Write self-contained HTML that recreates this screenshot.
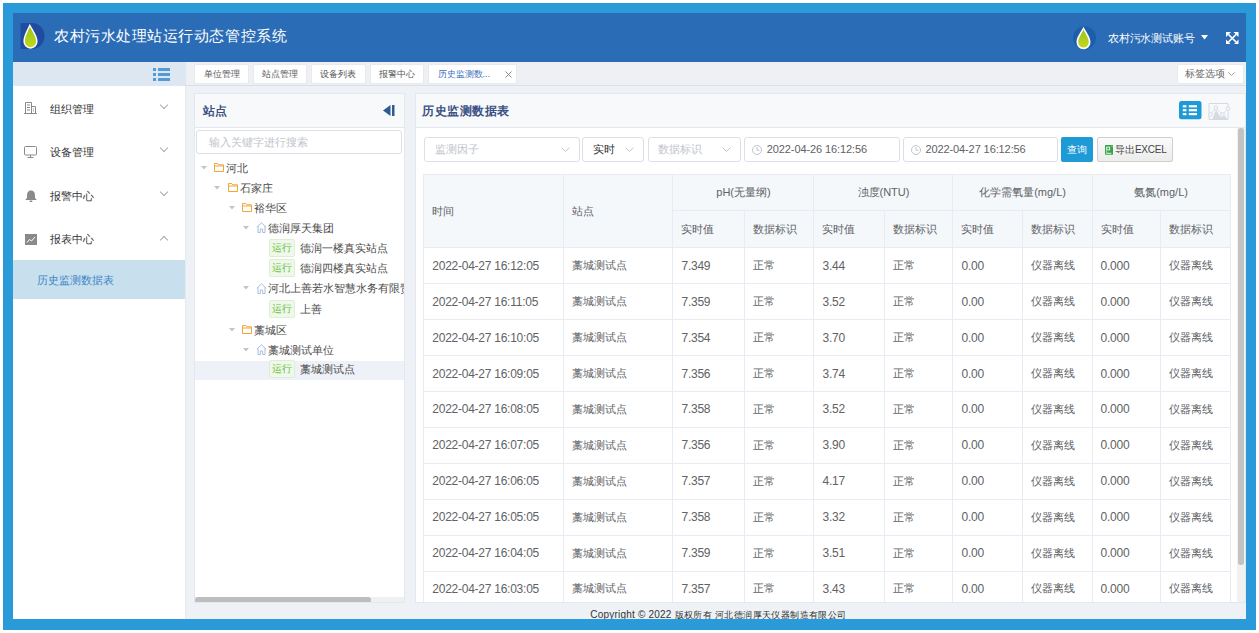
<!DOCTYPE html>
<html><head><meta charset="utf-8">
<style>
*{box-sizing:border-box;margin:0;padding:0}
html,body{width:1259px;height:633px;overflow:hidden;background:#fff;font-family:"Liberation Sans",sans-serif;color:#333}
.abs{position:absolute}
#frame{position:absolute;left:3px;top:3px;width:1253px;height:627px;background:#2b9ad8}
#inner{position:absolute;left:13px;top:13px;width:1233px;height:606px;background:#eef1f5;overflow:hidden}
#header{position:absolute;left:0;top:0;width:1233px;height:49px;background:#2b6cb6}
#title{position:absolute;left:41px;top:12px;font-size:15.4px;letter-spacing:0.55px;color:#fff;white-space:nowrap;line-height:22px}
#user{position:absolute;left:1095px;top:18px;font-size:11px;color:#fff;white-space:nowrap;line-height:14px;letter-spacing:-0.2px}
#sbtop{position:absolute;left:0;top:49px;width:173px;height:24px;background:#dde7f1}
#tabbar{position:absolute;left:173px;top:49px;width:1060px;height:24px;background:#eff0f3;border-bottom:1px solid #dcdfe6}
.tab{position:absolute;top:2px;height:19.5px;background:#fff;border:1px solid #e8eaee;border-radius:2px;font-size:9px;line-height:18.5px;color:#555;text-align:center;white-space:nowrap}
#sidebar{position:absolute;left:0;top:73px;width:173px;height:533px;background:#fff;border-right:1px solid #e6e9ee}
.mi{position:absolute;left:37px;font-size:11px;line-height:14px;color:#333;white-space:nowrap}
.chev{position:absolute;left:148px;width:6px;height:6px;border-right:1px solid #aaa;border-bottom:1px solid #aaa}
#submenu{position:absolute;left:0;top:174px;width:172px;height:39px;background:#c8e0ee}
#tree{position:absolute;left:180.5px;top:80.3px;width:211px;height:510px;background:#fff;border:1px solid #e4e7ed}
#data{position:absolute;left:401.5px;top:80.3px;width:831px;height:510px;background:#fff;border:1px solid #e4e7ed}
.phead{position:absolute;left:0;top:0;right:0;height:34px;background:#f8f9fb;border-bottom:1px solid #e4e7ed}
.tt{position:absolute;font-size:11px;line-height:20px;color:#4a4a4a;white-space:nowrap}
.tag{position:absolute;width:25.6px;height:18px;background:#eff8ea;border:1px solid #dcefd1;border-radius:2px;font-size:9.5px;line-height:16px;color:#67c23a;text-align:center}
#tree{overflow:hidden}
.sel{position:absolute;top:42.5px;height:25px;border:1px solid #dcdfe6;border-radius:3px;background:#fff}
.sel span{position:absolute;top:0;font-size:11px;line-height:23px;white-space:nowrap}
.sel span.d{color:#606266;letter-spacing:-0.1px}
#data{overflow:hidden}
#tbl{position:absolute;border-collapse:collapse;table-layout:fixed;width:806.3px}
#tbl td{border:1px solid #e8ebf1;font-size:11px;color:#606266;padding:0 0 0 8px;white-space:nowrap;overflow:hidden}
#tbl tr.h1 td,#tbl tr.h2 td{background:#f5f8fb;color:#606266}
#tbl tr.h1{height:36px}
#tbl tr.h2{height:37px}
#tbl tr{height:35.9px}
#tbl td.c{text-align:center;padding:0}
#tbl td.dt,#tbl td.num{font-size:12px;letter-spacing:-0.25px}
#footer{position:absolute;left:172px;top:596px;width:1067px;text-align:center;font-size:9.5px;line-height:12px;color:#333;white-space:nowrap}
</style></head>
<body>
<div id="frame"></div>
<div id="inner">
  <div id="header">
    <svg class="abs" style="left:7px;top:10px" width="25" height="26" viewBox="0 0 25 26">
      <path d="M0.5 0 H12 A12.5 13 0 0 1 12 26 H0.5 Z" fill="#1f4ca0"/>
      <path d="M9.8 0.8 C12 6 17.6 12 17.6 18.6 A7.1 7.1 0 0 1 3.4 18.6 C3.4 12 7.8 6 9.8 0.8 Z" fill="#fff"/>
      <defs><linearGradient id="g1" x1="0" y1="0" x2="0" y2="1"><stop offset="0" stop-color="#9cc21a"/><stop offset="1" stop-color="#c3d820"/></linearGradient></defs>
      <path d="M9.9 3.8 C11.6 8 16.1 13 16.1 18.6 A5.6 5.6 0 0 1 4.9 18.6 C4.9 13 8.4 8 9.9 3.8 Z" fill="url(#g1)"/>
    </svg>
    <div id="title">农村污水处理站运行动态管控系统</div>
    <svg class="abs" style="left:1060px;top:12.5px" width="24" height="24" viewBox="0 0 24 24">
      <circle cx="11.5" cy="11.8" r="11.5" fill="#1c5ea9"/>
      <path d="M10.5 0.8 C13 6 17.5 11 17.5 16.2 A7 7 0 0 1 3.5 16.2 C3.5 11 8 6 10.5 0.8 Z" fill="#fff"/>
      <path d="M10.5 3.8 C12.5 8 15.8 12 15.8 16.2 A5.3 5.3 0 0 1 5.2 16.2 C5.2 12 8.5 8 10.5 3.8 Z" fill="url(#g1)"/>
    </svg>
    <div id="user">农村污水测试账号</div>
    <svg class="abs" style="left:1188px;top:22px" width="7" height="5" viewBox="0 0 7 5"><path d="M0 0 H7 L3.5 4.5 Z" fill="#fff"/></svg>
    <svg class="abs" style="left:1213px;top:18.8px" width="12.5" height="12.5" viewBox="0 0 12.5 12.5">
      <path d="M2.5 2.5 L10 10 M10 2.5 L2.5 10" stroke="#fff" stroke-width="1.7"/>
      <path d="M0 0 H5 L0 5 Z M12.5 0 V5 L7.5 0 Z M12.5 12.5 H7.5 L12.5 7.5 Z M0 12.5 V7.5 L5 12.5 Z" fill="#fff"/>
    </svg>
  </div>
  <div id="sbtop">
    <svg class="abs" style="left:140px;top:6px" width="17" height="13" viewBox="0 0 17 13" fill="#549bd6">
      <rect x="0" y="0" width="3" height="3"/><rect x="5" y="0" width="12" height="3"/>
      <rect x="0" y="5" width="3" height="3"/><rect x="5" y="5" width="12" height="3"/>
      <rect x="0" y="10" width="3" height="3"/><rect x="5" y="10" width="12" height="3"/>
    </svg>
  </div>
  <div id="tabbar">
    <div class="tab" style="left:8px;width:55px">单位管理</div>
    <div class="tab" style="left:66.8px;width:54.4px">站点管理</div>
    <div class="tab" style="left:125px;width:54.6px">设备列表</div>
    <div class="tab" style="left:183.6px;width:54.4px">报警中心</div>
    <div class="tab" style="left:241.6px;width:89.3px;color:#3b6fc0;text-align:left;padding-left:9px">历史监测数...<svg class="abs" style="left:76.5px;top:5.8px" width="7" height="7" viewBox="0 0 7 7" stroke="#8a8a8a" stroke-width="1"><path d="M0.5 0.5 L6.5 6.5 M6.5 0.5 L0.5 6.5"/></svg></div>
    <div class="tab" style="left:991px;top:2px;width:67px;height:19.5px;line-height:17.5px;color:#666;font-size:9.5px;text-align:left;padding-left:7px">标签选项<svg class="abs" style="left:50px;top:6.5px" width="7" height="4" viewBox="0 0 7 4" fill="none" stroke="#999" stroke-width="0.9"><path d="M0.3 0.3 L3.5 3.5 L6.7 0.3"/></svg></div>
  </div>
  <div id="sidebar">
    <svg class="abs" style="left:11px;top:16px" width="13" height="12" viewBox="0 0 13 12" fill="none" stroke="#8a8a8a" stroke-width="1">
      <path d="M0 11.5 H13"/><path d="M1.5 11.5 V0.5 H7.5 V11.5"/><path d="M7.5 4.5 H11.5 V11.5"/>
      <path d="M3 3 H6 M3 5.5 H6 M3 8 H6 M9 7 H10 M9 9 H10"/>
    </svg>
    <div class="mi" style="top:15.5px">组织管理</div>
    <div class="chev" style="top:15.5px;transform:rotate(45deg)"></div>
    <svg class="abs" style="left:11px;top:60px" width="13" height="12" viewBox="0 0 13 12" fill="none" stroke="#8a8a8a" stroke-width="1">
      <rect x="0.5" y="0.5" width="12" height="8.5" rx="1"/><path d="M6.5 9 V11.3 M3.5 11.5 H9.5"/>
    </svg>
    <div class="mi" style="top:59px">设备管理</div>
    <div class="chev" style="top:59px;transform:rotate(45deg)"></div>
    <svg class="abs" style="left:11.5px;top:103.5px" width="12" height="12" viewBox="0 0 12 12" fill="#8a8a8a">
      <path d="M6 0.5 C3 0.5 2 3 2 5.5 V8 L0.5 9.5 V10 H11.5 V9.5 L10 8 V5.5 C10 3 9 0.5 6 0.5 Z"/><rect x="4.5" y="10.5" width="3" height="1.5" rx="0.7"/>
    </svg>
    <div class="mi" style="top:102.5px">报警中心</div>
    <div class="chev" style="top:102.5px;transform:rotate(45deg)"></div>
    <svg class="abs" style="left:11.5px;top:148px" width="12" height="11" viewBox="0 0 12 11">
      <rect x="0" y="0" width="12" height="11" fill="#8a8a8a"/><path d="M2 8.5 L4.5 5.5 L6.5 7 L10 3" stroke="#fff" stroke-width="1" fill="none"/>
    </svg>
    <div class="mi" style="top:146px">报表中心</div>
    <div class="chev" style="top:151px;transform:rotate(-135deg)"></div>
    <div id="submenu"><div class="mi" style="left:23.5px;top:12.5px;color:#3d86c6">历史监测数据表</div></div>
  </div>
  <div id="tree">
    <div class="phead">
      <div class="abs" style="left:8.5px;top:9px;font-size:11.5px;font-weight:bold;color:#3a5283;line-height:17px">站点</div>
      <svg class="abs" style="left:188.5px;top:11.2px" width="12" height="11" viewBox="0 0 12 11" fill="#2f5c8f"><path d="M0 5.5 L7.5 0 V11 Z"/><rect x="9" y="0" width="2.5" height="11"/></svg>
    </div>
    <div class="abs" style="left:1.5px;top:35.7px;width:206px;height:24.5px;border:1px solid #dcdfe6;border-radius:3px;font-size:11px;line-height:22px;color:#c0c4cc;padding-left:12px;white-space:nowrap">输入关键字进行搜索</div>
    <svg class="abs" style="left:6.1px;top:71.4px" width="6" height="4" viewBox="0 0 6 4"><path d="M0 0 H6 L3 3.5 Z" fill="#c0c4cc"/></svg>
    <svg class="abs" style="left:19.7px;top:68.9px" width="10" height="9" viewBox="0 0 10 9" fill="none" stroke="#f3a43a" stroke-width="1"><path d="M0.5 0.5 H3.8 L4.8 1.8 H9.5 V8.5 H0.5 Z M0.5 3 H9.5"/></svg>
    <div class="tt" style="left:31.9px;top:63.4px">河北</div>
    <svg class="abs" style="left:19.9px;top:91.4px" width="6" height="4" viewBox="0 0 6 4"><path d="M0 0 H6 L3 3.5 Z" fill="#c0c4cc"/></svg>
    <svg class="abs" style="left:33.7px;top:88.9px" width="10" height="9" viewBox="0 0 10 9" fill="none" stroke="#f3a43a" stroke-width="1"><path d="M0.5 0.5 H3.8 L4.8 1.8 H9.5 V8.5 H0.5 Z M0.5 3 H9.5"/></svg>
    <div class="tt" style="left:45.7px;top:83.4px">石家庄</div>
    <svg class="abs" style="left:34.3px;top:111.4px" width="6" height="4" viewBox="0 0 6 4"><path d="M0 0 H6 L3 3.5 Z" fill="#c0c4cc"/></svg>
    <svg class="abs" style="left:47.5px;top:108.9px" width="10" height="9" viewBox="0 0 10 9" fill="none" stroke="#f3a43a" stroke-width="1"><path d="M0.5 0.5 H3.8 L4.8 1.8 H9.5 V8.5 H0.5 Z M0.5 3 H9.5"/></svg>
    <div class="tt" style="left:59.8px;top:103.4px">裕华区</div>
    <svg class="abs" style="left:48.1px;top:131.4px" width="6" height="4" viewBox="0 0 6 4"><path d="M0 0 H6 L3 3.5 Z" fill="#c0c4cc"/></svg>
    <svg class="abs" style="left:61.4px;top:127.9px" width="11" height="11" viewBox="0 0 11 11" fill="none" stroke="#a7bedb" stroke-width="1"><path d="M0.8 5.3 L5.5 0.8 L10.2 5.3 M2 4.3 V10.5 H4.3 V7 H6.7 V10.5 H9 V4.3"/></svg>
    <div class="tt" style="left:73.5px;top:123.4px">德润厚天集团</div>
    <div class="tag" style="left:74.6px;top:144.7px">运行</div>
    <div class="tt" style="left:105.5px;top:143.7px">德润一楼真实站点</div>
    <div class="tag" style="left:74.6px;top:164.8px">运行</div>
    <div class="tt" style="left:105.5px;top:163.8px">德润四楼真实站点</div>
    <svg class="abs" style="left:48.1px;top:192.0px" width="6" height="4" viewBox="0 0 6 4"><path d="M0 0 H6 L3 3.5 Z" fill="#c0c4cc"/></svg>
    <svg class="abs" style="left:61.4px;top:188.5px" width="11" height="11" viewBox="0 0 11 11" fill="none" stroke="#a7bedb" stroke-width="1"><path d="M0.8 5.3 L5.5 0.8 L10.2 5.3 M2 4.3 V10.5 H4.3 V7 H6.7 V10.5 H9 V4.3"/></svg>
    <div class="tt" style="left:73.5px;top:184.0px">河北上善若水智慧水务有限责任公司</div>
    <div class="tag" style="left:74.6px;top:205.7px">运行</div>
    <div class="tt" style="left:105.5px;top:204.7px">上善</div>
    <svg class="abs" style="left:34.3px;top:233.4px" width="6" height="4" viewBox="0 0 6 4"><path d="M0 0 H6 L3 3.5 Z" fill="#c0c4cc"/></svg>
    <svg class="abs" style="left:47.5px;top:230.9px" width="10" height="9" viewBox="0 0 10 9" fill="none" stroke="#f3a43a" stroke-width="1"><path d="M0.5 0.5 H3.8 L4.8 1.8 H9.5 V8.5 H0.5 Z M0.5 3 H9.5"/></svg>
    <div class="tt" style="left:59.8px;top:225.4px">藁城区</div>
    <svg class="abs" style="left:48.1px;top:253.4px" width="6" height="4" viewBox="0 0 6 4"><path d="M0 0 H6 L3 3.5 Z" fill="#c0c4cc"/></svg>
    <svg class="abs" style="left:61.4px;top:249.9px" width="11" height="11" viewBox="0 0 11 11" fill="none" stroke="#a7bedb" stroke-width="1"><path d="M0.8 5.3 L5.5 0.8 L10.2 5.3 M2 4.3 V10.5 H4.3 V7 H6.7 V10.5 H9 V4.3"/></svg>
    <div class="tt" style="left:73.5px;top:245.4px">藁城测试单位</div>
    <div class="abs" style="left:0;top:266.9px;width:209px;height:19px;background:#eef2f8"></div>
    <div class="tag" style="left:74.6px;top:266.1px">运行</div>
    <div class="tt" style="left:105.5px;top:265.1px">藁城测试点</div>
    <div class="abs" style="left:0;top:502.5px;width:209px;height:6.5px;background:#f0f0f0"></div>
    <div class="abs" style="left:0.5px;top:502.5px;width:176px;height:6.5px;background:#bdbdbd;border-radius:3px"></div>
  </div>
  <div id="data">
    <div class="phead">
      <div class="abs" style="left:6.5px;top:9px;font-size:12.3px;letter-spacing:0.5px;font-weight:bold;color:#3b5284;line-height:17px">历史监测数据表</div>
      <svg class="abs" style="left:763.3px;top:7.1px" width="23" height="19" viewBox="0 0 23 19"><rect x="0" y="0" width="22.5" height="18.3" rx="2.5" fill="#1e9ad6"/>
        <g fill="#fff"><rect x="3.8" y="4.2" width="3.6" height="2.2"/><rect x="9.8" y="4.2" width="8.2" height="2.2"/><rect x="3.8" y="8.1" width="3.6" height="2.2"/><rect x="9.8" y="8.1" width="8.2" height="2.2"/><rect x="3.8" y="12" width="3.6" height="2.2"/><rect x="9.8" y="12" width="8.2" height="2.2"/></g></svg>
      <svg class="abs" style="left:792.3px;top:7.7px" width="23" height="19" viewBox="0 0 23 19" fill="none" stroke="#d5d9e1" stroke-width="1"><path d="M1 17.5 V1.5 H20 V5 M20 9 V17.5 H1"/>
        <path d="M2.5 12.5 L7.5 6 L14.5 12.5 L20.5 6" stroke="#dde0e6"/>
        <path d="M4 17.5 C6 14 7 9 8 8 C9.5 10 11 14 13.5 15.5 L17 14 L19.5 17.5 Z" fill="#d5d9e1" stroke="none"/>
        <circle cx="2.5" cy="12.5" r="1.8" fill="#f8f9fb"/><circle cx="7.8" cy="5.8" r="1.8" fill="#f8f9fb"/><circle cx="14.5" cy="12.5" r="1.8" fill="#f8f9fb"/><circle cx="20.2" cy="6.5" r="1.8" fill="#f8f9fb"/></svg>
    </div>
    <div class="sel" style="left:8.6px;width:155.7px"><span style="left:9.5px;color:#c0c4cc">监测因子</span><svg class="abs" style="left:136px;top:9.5px" width="9" height="5" viewBox="0 0 9 5" fill="none" stroke="#c0c4cc" stroke-width="1"><path d="M0.5 0.5 L4.5 4.5 L8.5 0.5"/></svg></div>
    <div class="sel" style="left:166.8px;width:62.2px"><span style="left:10px;color:#333">实时</span><svg class="abs" style="left:41.5px;top:9.5px" width="9" height="5" viewBox="0 0 9 5" fill="none" stroke="#c0c4cc" stroke-width="1"><path d="M0.5 0.5 L4.5 4.5 L8.5 0.5"/></svg></div>
    <div class="sel" style="left:232.7px;width:92.7px"><span style="left:9px;color:#c0c4cc">数据标识</span><svg class="abs" style="left:72.5px;top:9.5px" width="9" height="5" viewBox="0 0 9 5" fill="none" stroke="#c0c4cc" stroke-width="1"><path d="M0.5 0.5 L4.5 4.5 L8.5 0.5"/></svg></div>
    <div class="sel" style="left:328.8px;width:155.5px"><svg class="abs" style="left:7px;top:7px" width="10" height="10" viewBox="0 0 10 10" fill="none" stroke="#c0c4cc" stroke-width="1"><circle cx="5" cy="5" r="4.5"/><path d="M5 2 V5.2 H7.5"/></svg><span class="d" style="left:21.5px;top:0.7px">2022-04-26 16:12:56</span></div>
    <div class="sel" style="left:487.4px;width:155.5px"><svg class="abs" style="left:7px;top:7px" width="10" height="10" viewBox="0 0 10 10" fill="none" stroke="#c0c4cc" stroke-width="1"><circle cx="5" cy="5" r="4.5"/><path d="M5 2 V5.2 H7.5"/></svg><span class="d" style="left:21.5px;top:0.7px">2022-04-27 16:12:56</span></div>
    <div class="abs" style="left:645.8px;top:42.9px;width:32.1px;height:24.6px;background:#1e9ad6;border-radius:2px;color:#fff;font-size:10px;line-height:26px;text-align:center">查询</div>
    <div class="abs" style="left:681.8px;top:42.9px;width:75.4px;height:24.6px;background:linear-gradient(#fbfbfb,#ececec);border:1px solid #cfcfcf;border-radius:2px;color:#333;font-size:10px;line-height:22px;white-space:nowrap">
      <svg class="abs" style="left:6.5px;top:6.4px" width="8.5" height="10" viewBox="0 0 8.5 10"><rect x="0" y="0" width="8.2" height="9.8" rx="0.8" fill="#36a347"/><rect x="1.7" y="2.1" width="3" height="2.8" fill="none" stroke="#fff" stroke-width="0.9"/><path d="M1.6 5.5 V7.8" stroke="#bfe3c4" stroke-width="0.9"/><path d="M1.2 8.3 H6.3" stroke="#fff" stroke-width="0.9"/><path d="M6 1 L7.3 1 L7.3 2.3" stroke="#8fd39a" stroke-width="0.7" fill="none"/></svg>
      <span class="abs" style="left:17px;top:1px;letter-spacing:-0.2px;color:#444">导出EXCEL</span></div>
    <table id="tbl" style="left:7.8px;top:80.2px"><colgroup><col style="width:140.2px"><col style="width:109.0px"><col style="width:71.9px"><col style="width:69.1px"><col style="width:70.1px"><col style="width:68.9px"><col style="width:69.3px"><col style="width:69.8px"><col style="width:68.9px"><col style="width:69.1px"></colgroup>
      <tr class="h1"><td rowspan="2">时间</td><td rowspan="2">站点</td><td colspan="2" class="c">pH(无量纲)</td><td colspan="2" class="c">浊度(NTU)</td><td colspan="2" class="c">化学需氧量(mg/L)</td><td colspan="2" class="c">氨氮(mg/L)</td></tr>
      <tr class="h2"><td>实时值</td><td>数据标识</td><td>实时值</td><td>数据标识</td><td>实时值</td><td>数据标识</td><td>实时值</td><td>数据标识</td></tr>
      <tr><td class="dt">2022-04-27 16:12:05</td><td>藁城测试点</td><td class="num">7.349</td><td>正常</td><td class="num">3.44</td><td>正常</td><td class="num">0.00</td><td>仪器离线</td><td class="num">0.000</td><td>仪器离线</td></tr>
      <tr><td class="dt">2022-04-27 16:11:05</td><td>藁城测试点</td><td class="num">7.359</td><td>正常</td><td class="num">3.52</td><td>正常</td><td class="num">0.00</td><td>仪器离线</td><td class="num">0.000</td><td>仪器离线</td></tr>
      <tr><td class="dt">2022-04-27 16:10:05</td><td>藁城测试点</td><td class="num">7.354</td><td>正常</td><td class="num">3.70</td><td>正常</td><td class="num">0.00</td><td>仪器离线</td><td class="num">0.000</td><td>仪器离线</td></tr>
      <tr><td class="dt">2022-04-27 16:09:05</td><td>藁城测试点</td><td class="num">7.356</td><td>正常</td><td class="num">3.74</td><td>正常</td><td class="num">0.00</td><td>仪器离线</td><td class="num">0.000</td><td>仪器离线</td></tr>
      <tr><td class="dt">2022-04-27 16:08:05</td><td>藁城测试点</td><td class="num">7.358</td><td>正常</td><td class="num">3.52</td><td>正常</td><td class="num">0.00</td><td>仪器离线</td><td class="num">0.000</td><td>仪器离线</td></tr>
      <tr><td class="dt">2022-04-27 16:07:05</td><td>藁城测试点</td><td class="num">7.356</td><td>正常</td><td class="num">3.90</td><td>正常</td><td class="num">0.00</td><td>仪器离线</td><td class="num">0.000</td><td>仪器离线</td></tr>
      <tr><td class="dt">2022-04-27 16:06:05</td><td>藁城测试点</td><td class="num">7.357</td><td>正常</td><td class="num">4.17</td><td>正常</td><td class="num">0.00</td><td>仪器离线</td><td class="num">0.000</td><td>仪器离线</td></tr>
      <tr><td class="dt">2022-04-27 16:05:05</td><td>藁城测试点</td><td class="num">7.358</td><td>正常</td><td class="num">3.32</td><td>正常</td><td class="num">0.00</td><td>仪器离线</td><td class="num">0.000</td><td>仪器离线</td></tr>
      <tr><td class="dt">2022-04-27 16:04:05</td><td>藁城测试点</td><td class="num">7.359</td><td>正常</td><td class="num">3.51</td><td>正常</td><td class="num">0.00</td><td>仪器离线</td><td class="num">0.000</td><td>仪器离线</td></tr>
      <tr><td class="dt">2022-04-27 16:03:05</td><td>藁城测试点</td><td class="num">7.357</td><td>正常</td><td class="num">3.43</td><td>正常</td><td class="num">0.00</td><td>仪器离线</td><td class="num">0.000</td><td>仪器离线</td></tr>
    </table>
    <div class="abs" style="left:821.5px;top:33.7px;width:8px;height:475px;background:#f1f1f1"></div>
    <div class="abs" style="left:822.7px;top:33.7px;width:5.4px;height:437.5px;background:#c3c3c3;border-radius:2.7px"></div>
  </div>
  <div id="footer"><span style="font-size:10px;letter-spacing:0.2px">Copyright © 2022 </span><span style="font-size:9px;letter-spacing:0.4px">版权所有 河北德润厚天仪器制造有限公司</span></div>
</div>
</body></html>
